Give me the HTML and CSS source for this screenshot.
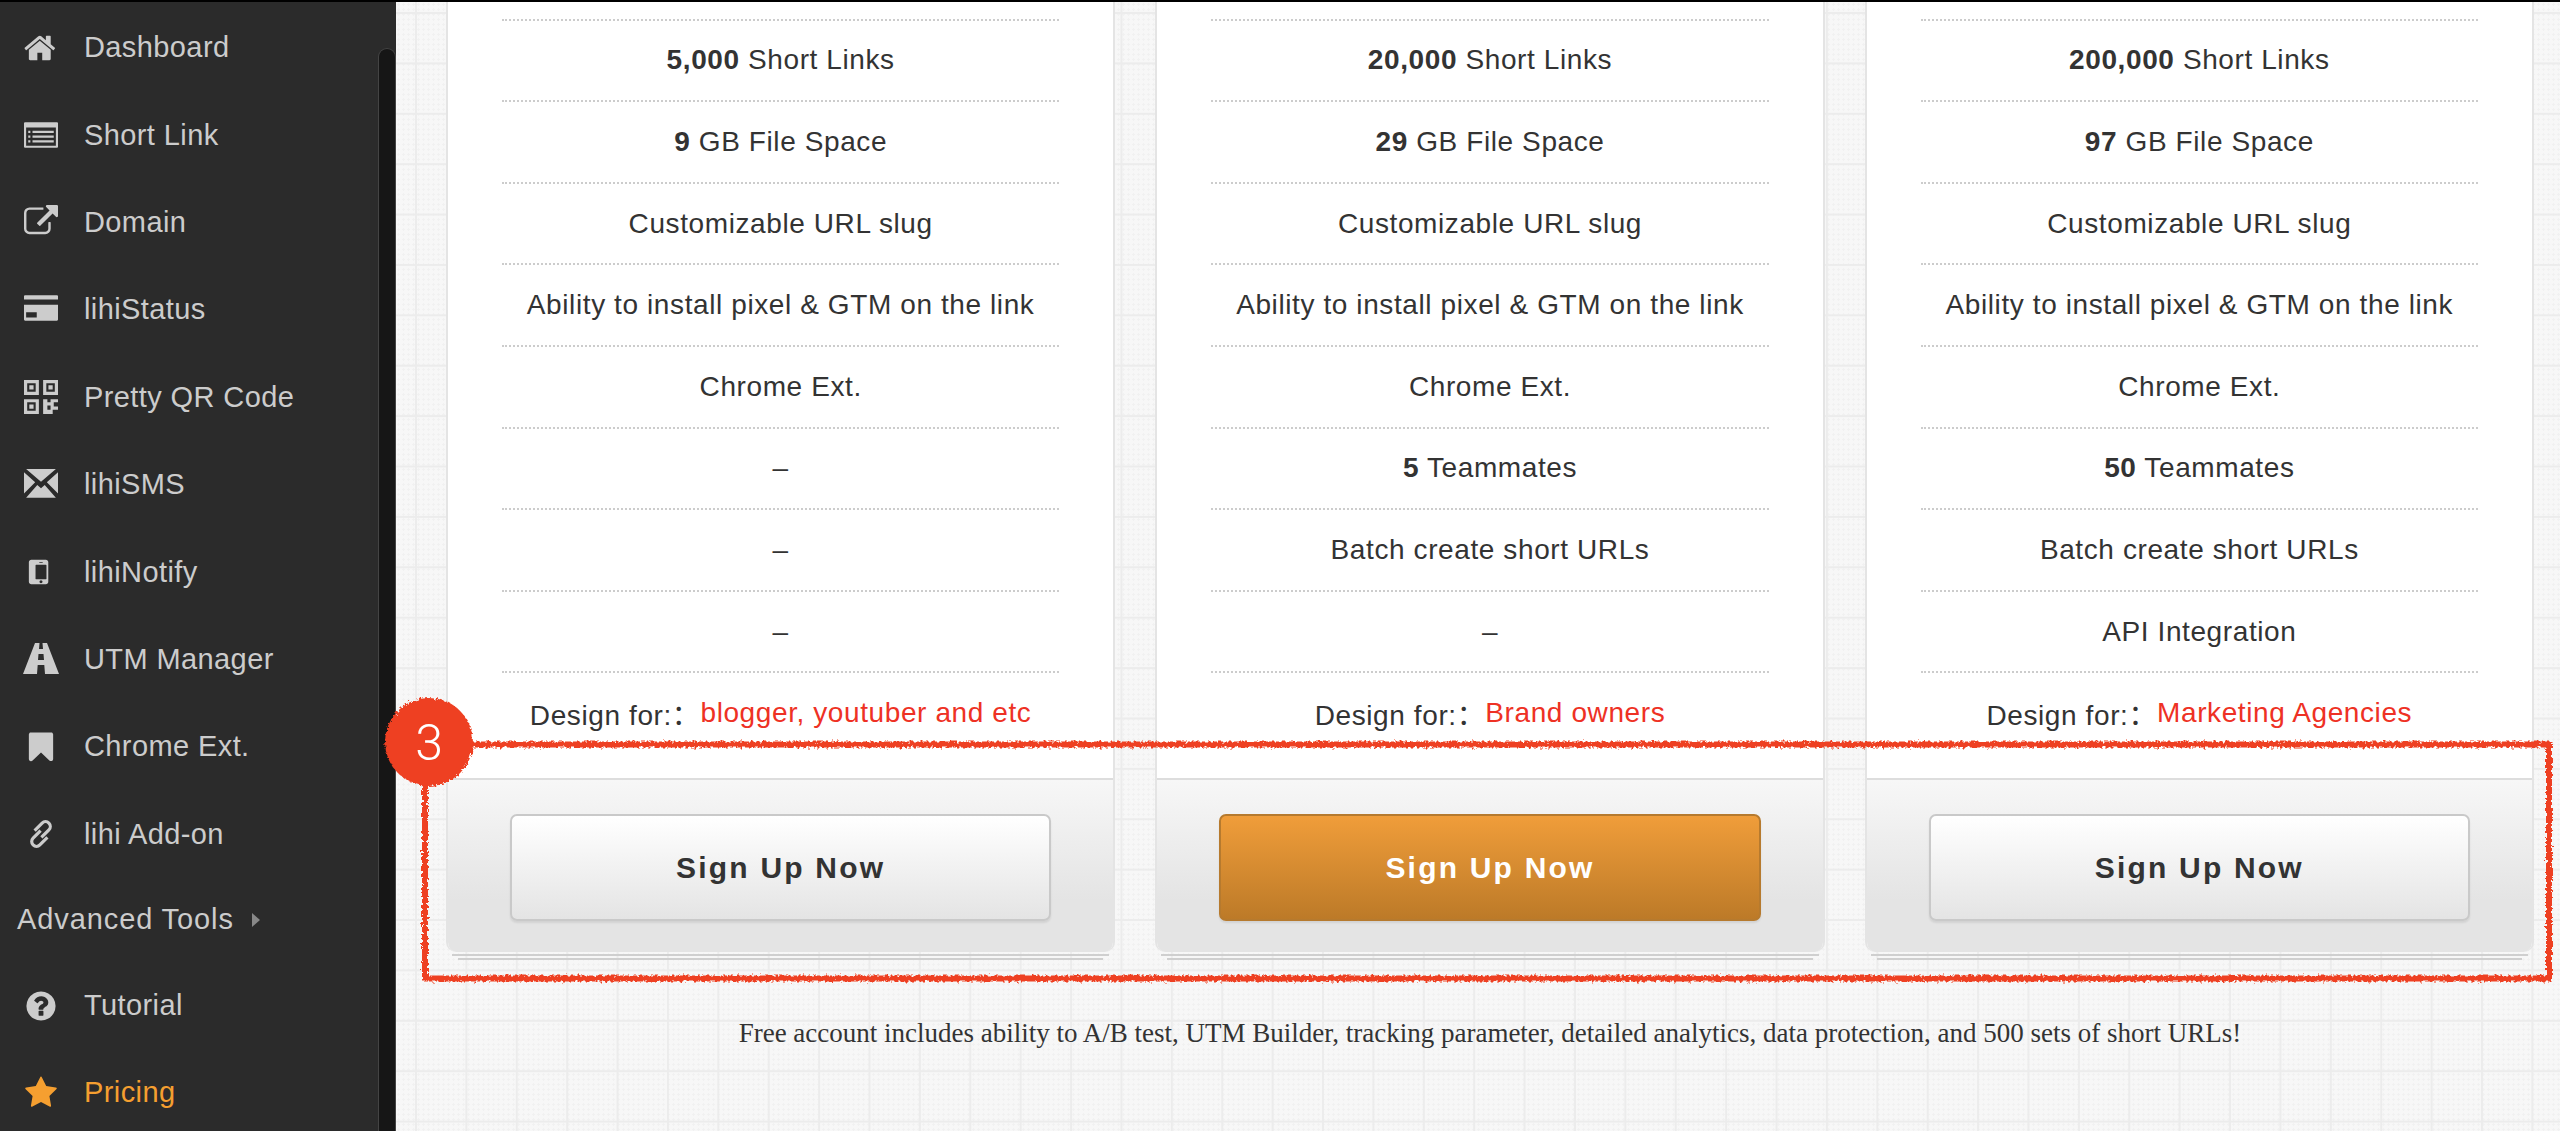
FILE: index.html
```html
<!DOCTYPE html>
<html lang="en">
<head>
  <meta charset="UTF-8" />
  <title>lihi.io Pricing</title>
  <link rel="stylesheet" href="styles.css">
</head>
<body>
  <div class="layout">
    <aside class="sidebar">
      <ul class="nav">
        <li><svg class="icon" viewBox="0 0 1792 1792"><path d="M1408 992v480q0 26-19 45t-45 19h-384v-384h-256v384h-384q-26 0-45-19t-19-45v-480q0-1 .5-3t.5-3l575-474 575 474q1 2 1 6zm223-69l-62 74q-8 9-21 11h-3q-13 0-21-7l-692-577-692 577q-12 8-24 7-13-2-21-11l-62-74q-8-10-7-23.5t11-21.5l719-599q32-26 76-26t76 26l244 204v-195q0-14 9-23t23-9h192q14 0 23 9t9 23v408l219 182q10 8 11 21.5t-7 23.5z"/></svg>Dashboard</li>
        <li><svg class="icon" viewBox="0 0 32 32"><path fill-rule="evenodd" d="M1 4h30a1 1 0 0 1 1 1v22a1 1 0 0 1-1 1H1a1 1 0 0 1-1-1V5a1 1 0 0 1 1-1zM2 9v17h28V9z"/><path d="M4 12h2v2H4zM8 12h20v2H8zM4 16.500h2v2H4zM8 16.500h20v2H8zM4 21h2v2H4zM8 21h20v2H8z"/></svg>Short Link</li>
        <li><svg class="icon" viewBox="0 0 1792 1792"><path d="M1408 928v320q0 119-84.500 203.500t-203.500 84.500h-832q-119 0-203.500-84.500t-84.500-203.500v-832q0-119 84.500-203.500t203.500-84.500h704q14 0 23 9t9 23v64q0 14-9 23t-23 9h-704q-66 0-113 47t-47 113v832q0 66 47 113t113 47h832q66 0 113-47t47-113v-320q0-14 9-23t23-9h64q14 0 23 9t9 23zm384-864v512q0 26-19 45t-45 19-45-19l-176-176-652 652q-10 10-23 10t-23-10l-114-114q-10-10-10-23t10-23l652-652-176-176q-19-19-19-45t19-45 45-19h512q26 0 45 19t19 45z"/></svg>Domain</li>
        <li><svg class="icon" viewBox="0 0 32 32"><path fill-rule="evenodd" d="M1 2h30a1 1 0 0 1 1 1v3H0V3a1 1 0 0 1 1-1zM0 11h32v14a1 1 0 0 1-1 1H1a1 1 0 0 1-1-1zM2 18v5h10v-5z"/></svg>lihiStatus</li>
        <li><svg class="icon" viewBox="0 0 32 32"><path fill-rule="evenodd" d="M0 0h14v14H0zM3 3v8h8V3zM5 5h4v4H5zM18 0h14v14H18zM21 3v8h8V3zM23 5h4v4h-4zM0 18h14v14H0zM3 21v8h8v-8zM5 23h4v4H5zM18 18h4v3h3v-3h7v3h-4v4h4v3h-7v-4h-3v4h5v4H18z"/></svg>Pretty QR Code</li>
        <li><svg class="icon" viewBox="0 0 32 32"><path d="M2 1h28L16 13zM0 4l10.500 9.500L0 24zM32 4L21.500 13.500 32 24zM2 28l10.500-12 3.500 3 3.500-3L30 28z"/></svg>lihiSMS</li>
        <li><svg class="icon" viewBox="0 0 1792 1792"><path d="M976 1408q0-33-23.500-56.500t-56.500-23.500-56.500 23.500-23.500 56.500 23.500 56.500 56.500 23.500 56.500-23.500 23.500-56.500zm208-160v-704q0-13-9.500-22.500t-22.500-9.500h-512q-13 0-22.500 9.500t-9.500 22.500v704q0 13 9.500 22.500t22.500 9.500h512q13 0 22.500-9.500t9.500-22.500zm-192-848q0-16-16-16h-160q-16 0-16 16t16 16h160q16 0 16-16zm288-16v1024q0 52-38 90t-90 38h-768q-52 0-90-38t-38-90v-1024q0-52 38-90t90-38h768q52 0 90 38t38 90z"/></svg>lihiNotify</li>
        <li><svg class="icon icon-wide" viewBox="0 0 36 32"><path fill-rule="evenodd" d="M12 0h4.500l-.5 6h4l-.5-6H24l12 31H22l-.7-9h-6.600L14 31H0zM15.500 11l-.5 6h6l-.5-6z"/></svg>UTM Manager</li>
        <li><svg class="icon" viewBox="0 0 1792 1792"><path d="M1420 128q23 0 44 9 33 13 52.500 41t19.500 62v1289q0 34-19.500 62t-52.500 41q-19 8-44 8-48 0-83-32l-441-424-441 424q-36 33-83 33-23 0-44-9-33-13-52.500-41t-19.500-62v-1289q0-34 19.500-62t52.500-41q21-9 44-9h1048z"/></svg>Chrome Ext.</li>
        <li><svg class="icon icon-line" viewBox="0 0 32 32"><g transform="rotate(-45 16 16)"><path d="M14 9.500H24a4.500 4.500 0 0 1 0 9H14"/><path d="M18 13.500H8a4.500 4.500 0 0 0 0 9H18"/></g></svg>lihi Add-on</li>
        <li class="nav-group">Advanced Tools<span class="caret"></span></li>
        <li><svg class="icon" viewBox="0 0 1792 1792"><path d="M1024 1376v-192q0-14-9-23t-23-9h-192q-14 0-23 9t-9 23v192q0 14 9 23t23 9h192q14 0 23-9t9-23zm256-672q0-88-55.500-163t-138.500-116-170-41q-243 0-371 213-15 24 8 42l132 100q7 6 19 6 16 0 25-12 53-68 86-92 34-24 86-24 48 0 85.500 26t37.500 59q0 38-20 61t-68 45q-63 28-115.500 86.500t-52.500 125.500v36q0 14 9 23t23 9h192q14 0 23-9t9-23q0-19 21.500-49.500t54.500-49.500q32-18 49-28.500t46-35 44.500-48 28-60.500 12.500-81zm384 192q0 209-103 385.500t-279.500 279.500-385.500 103-385.500-103-279.500-279.500-103-385.500 103-385.500 279.500-279.500 385.500-103 385.500 103 279.500 279.500 103 385.500z"/></svg>Tutorial</li>
        <li class="active"><svg class="icon" viewBox="0 0 1792 1792"><path d="M1728 647q0 22-26 48l-363 354 86 500q1 7 1 20 0 21-10.500 35.500t-30.500 14.500q-19 0-40-12l-449-236-449 236q-22 12-40 12-21 0-31.500-14.500t-10.500-35.500q0-6 2-20l86-500-364-354q-25-27-25-48 0-37 56-46l502-73 225-455q19-41 49-41t49 41l225 455 502 73q56 9 56 46z"/></svg>Pricing</li>
      </ul>
      <div class="scrollbar"></div>
    </aside>

    <main class="main">
      <div class="plans">
        <div class="plan">
          <div class="plan-box">
            <ul class="features">
              <li><b>5,000</b> Short Links</li>
              <li><b>9</b> GB File Space</li>
              <li>Customizable URL slug</li>
              <li>Ability to install pixel &amp; GTM on the link</li>
              <li>Chrome Ext.</li>
              <li>–</li>
              <li>–</li>
              <li>–</li>
              <li>Design for:：<span class="red">blogger, youtuber and etc</span></li>
            </ul>
            <div class="plan-footer"><a class="btn">Sign Up Now</a></div>
          </div>
          <div class="edge edge-1"></div>
          <div class="edge edge-2"></div>
        </div>

        <div class="plan">
          <div class="plan-box">
            <ul class="features">
              <li><b>20,000</b> Short Links</li>
              <li><b>29</b> GB File Space</li>
              <li>Customizable URL slug</li>
              <li>Ability to install pixel &amp; GTM on the link</li>
              <li>Chrome Ext.</li>
              <li><b>5</b> Teammates</li>
              <li>Batch create short URLs</li>
              <li>–</li>
              <li>Design for:：<span class="red">Brand owners</span></li>
            </ul>
            <div class="plan-footer"><a class="btn btn-orange">Sign Up Now</a></div>
          </div>
          <div class="edge edge-1"></div>
          <div class="edge edge-2"></div>
        </div>

        <div class="plan">
          <div class="plan-box">
            <ul class="features">
              <li><b>200,000</b> Short Links</li>
              <li><b>97</b> GB File Space</li>
              <li>Customizable URL slug</li>
              <li>Ability to install pixel &amp; GTM on the link</li>
              <li>Chrome Ext.</li>
              <li><b>50</b> Teammates</li>
              <li>Batch create short URLs</li>
              <li>API Integration</li>
              <li>Design for:：<span class="red">Marketing Agencies</span></li>
            </ul>
            <div class="plan-footer"><a class="btn">Sign Up Now</a></div>
          </div>
          <div class="edge edge-1"></div>
          <div class="edge edge-2"></div>
        </div>
      </div>

      <p class="note">Free account includes ability to A/B test, UTM Builder, tracking parameter, detailed analytics, data protection, and 500 sets of short URLs!</p>
    </main>
  </div>

  <!-- hand drawn marker on top of the screenshot -->
  <svg class="marker" viewBox="0 0 2560 1131">
    <defs>
      <filter id="rough" x="-5%" y="-5%" width="110%" height="110%">
        <feTurbulence type="fractalNoise" baseFrequency="0.35" numOctaves="2" seed="4"/>
        <feDisplacementMap in="SourceGraphic" scale="6"/>
      </filter>
    </defs>
    <g filter="url(#rough)">
      <rect class="marker-box" x="425" y="744.500" width="2124" height="234"/>
      <circle class="marker-dot" cx="429" cy="742" r="44"/>
    </g>
    <text class="marker-num" x="429" y="760">3</text>
  </svg>
</body>
</html>
```

FILE: styles.css
```css
* {
  box-sizing: border-box;
  margin: 0;
  padding: 0;
}

html, body {
  height: 1131px;
  overflow: hidden;
}

body {
  position: relative;
  border-top: 2px solid #000;
  font-family: "Liberation Sans", Arial, "Noto Sans CJK SC", sans-serif;
  color: #333;
}

ul {
  list-style: none;
}

.layout {
  display: flex;
  height: 1129px;
}

/* sidebar */
.sidebar {
  width: 396px;
  flex-shrink: 0;
  display: flex;
  background: #2b2b2b;
}

.nav {
  flex: 1;
  padding-top: 2px;
}

.nav li {
  display: flex;
  align-items: center;
  height: 87.4px;
  padding-left: 24px;
  font-size: 29px;
  letter-spacing: 0.4px;
  color: #ccc;
}

.nav li.nav-group {
  height: 84px;
  padding-left: 17px;
  letter-spacing: 0.9px;
}

.nav li.active {
  color: #f59f30;
}

.icon {
  width: 34px;
  height: 34px;
  margin-right: 26px;
  flex-shrink: 0;
  fill: currentColor;
}

.icon-wide {
  width: 36px;
  margin-left: -1px;
  margin-right: 25px;
}

.icon-line {
  fill: none;
  stroke: currentColor;
  stroke-width: 3px;
}

.caret {
  width: 0;
  height: 0;
  margin-left: 18px;
  border-left: 8px solid #888;
  border-top: 7px solid transparent;
  border-bottom: 7px solid transparent;
}

.scrollbar {
  width: 18px;
  margin-top: 46px;
  background: #161616;
  border: 1px solid #444;
  border-bottom: none;
  border-radius: 9px 9px 0 0;
}

/* main area with the grid paper background */
.main {
  flex: 1;
  padding: 0 26px 0 50px;
  background-color: #f7f7f7;
  background-image:
    linear-gradient(#ececec 2px, transparent 2px),
    linear-gradient(90deg, #ececec 2px, transparent 2px),
    radial-gradient(#f1f1f1 1.2px, transparent 1.4px);
  background-size: 50.4px 50.4px, 50.4px 50.4px, 5px 5px;
  background-position: 0 10px, 19px 0, 0 0;
}

.plans {
  display: flex;
  gap: 40px;
}

.plan {
  flex: 1;
}

.plan-box {
  background: #fff;
  border-left: 2px solid #e4e4e4;
  border-right: 2px solid #e4e4e4;
  border-radius: 0 0 10px 10px;
  overflow: hidden;
}

.features {
  padding: 16.6px 54px 25px;
}

.features li {
  height: 81.6px;
  display: flex;
  align-items: center;
  justify-content: center;
  white-space: pre;
  border-top: 2px dotted #ccc;
  font-size: 28px;
  letter-spacing: 0.6px;
  color: #333;
}

.features li:last-child {
  height: 82px;
}

.red {
  color: #ee3124;
}

.plan-footer {
  height: 174px;
  padding: 34px 62px 0;
  border-top: 2px solid #ddd;
  background: linear-gradient(#f7f7f7, #e4e4e4 70%);
}

.btn {
  display: block;
  height: 107px;
  line-height: 103px;
  text-align: center;
  font-size: 30px;
  font-weight: bold;
  letter-spacing: 2.2px;
  color: #333;
  background: linear-gradient(#fff, #e4e4e4);
  border: 2px solid #c9c9c9;
  border-radius: 7px;
  box-shadow: 0 2px 2px rgba(0, 0, 0, 0.08);
}

.btn-orange {
  color: #fff;
  background: linear-gradient(#f09d3a, #bc7a28);
  border-color: #b67a2e;
}

.edge {
  height: 2px;
  background: #cfcfcf;
}

.edge-1 {
  margin: 2px 6px 0;
}

.edge-2 {
  margin: 2px 12px 0;
}

.note {
  margin-top: 58px;
  text-align: center;
  font-family: "Liberation Serif", "Times New Roman", serif;
  font-size: 27px;
  color: #333;
}

/* red annotation */
.marker {
  position: absolute;
  left: 0;
  top: -2px;
  width: 2560px;
  height: 1131px;
  pointer-events: none;
}

.marker-box {
  fill: none;
  stroke: #ee4023;
  stroke-width: 6px;
}

.marker-dot {
  fill: #ee4023;
}

.marker-num {
  fill: #fff;
  font-family: Roboto, sans-serif;
  font-weight: 300;
  font-size: 50px;
  text-anchor: middle;
}
```
